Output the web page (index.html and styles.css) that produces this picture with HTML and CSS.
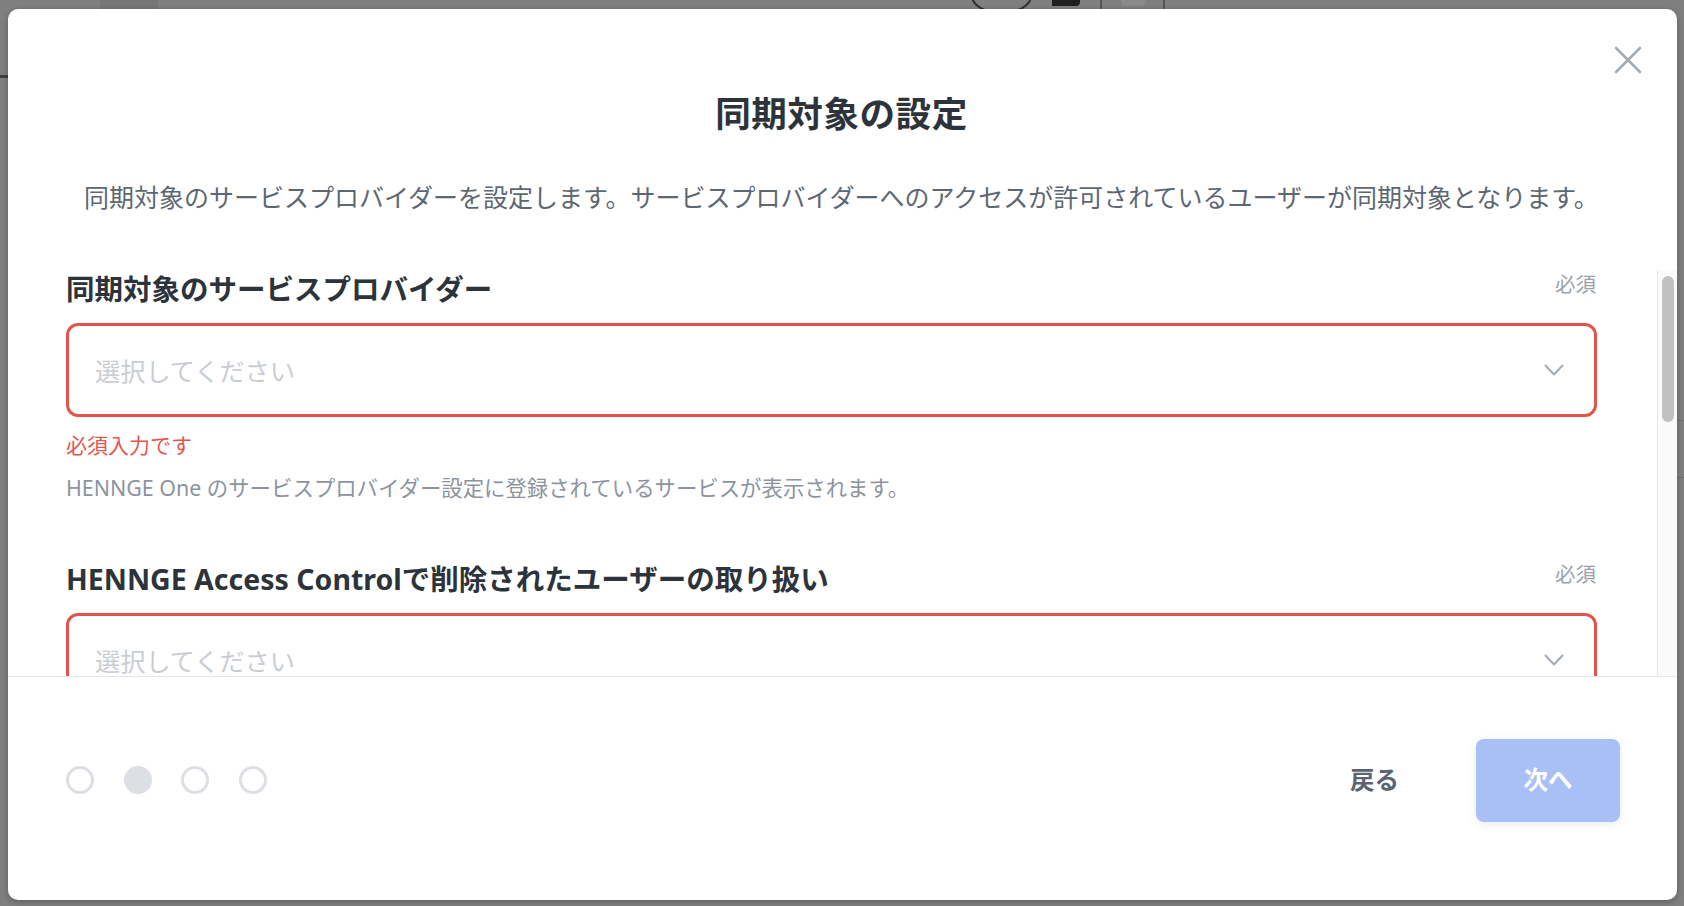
FILE: index.html
```html
<!DOCTYPE html>
<html lang="ja">
<head>
<meta charset="utf-8">
<title>同期対象の設定</title>
<link rel="stylesheet" href="styles.css">
</head>
<body>
<div class="backdrop">
  <div class="bg-tab"></div>
  <div class="bg-line"></div>
  <div class="bg-icons">
    <span class="bg-circle"></span>
    <span class="bg-arrow"></span>
    <span class="bg-box"><span class="bg-dot"></span></span>
  </div>
  <div class="bg-right"></div>
</div>

<div class="modal" role="dialog" aria-labelledby="modal-title">
  <header class="modal-header">
    <button class="close-btn" aria-label="閉じる">
      <svg width="28" height="28" viewBox="0 0 28 28" fill="none" stroke="#a3abb4" stroke-width="2.6" stroke-linecap="round">
        <line x1="2" y1="2" x2="26" y2="26"/>
        <line x1="26" y1="2" x2="2" y2="26"/>
      </svg>
    </button>
    <h1 id="modal-title" class="modal-title">同期対象の設定</h1>
    <p class="modal-desc">同期対象のサービスプロバイダーを設定します。サービスプロバイダーへのアクセスが許可されているユーザーが同期対象となります。</p>
  </header>

  <div class="modal-body">
    <div class="body-content">
      <section class="field">
        <div class="field-head">
          <label class="field-label">同期対象のサービスプロバイダー</label>
          <span class="required">必須</span>
        </div>
        <div class="select is-error">
          <span class="placeholder">選択してください</span>
          <svg class="chevron" width="20" height="12" viewBox="0 0 20 12" fill="none" stroke="#a3abb4" stroke-width="2" stroke-linecap="round" stroke-linejoin="round">
            <polyline points="1.5,1.5 10,10.5 18.5,1.5"/>
          </svg>
        </div>
        <p class="error-text">必須入力です</p>
        <p class="help-text">HENNGE One のサービスプロバイダー設定に登録されているサービスが表示されます。</p>
      </section>

      <section class="field field-second">
        <div class="field-head">
          <label class="field-label">HENNGE Access Controlで削除されたユーザーの取り扱い</label>
          <span class="required">必須</span>
        </div>
        <div class="select is-error">
          <span class="placeholder">選択してください</span>
          <svg class="chevron" width="20" height="12" viewBox="0 0 20 12" fill="none" stroke="#a3abb4" stroke-width="2" stroke-linecap="round" stroke-linejoin="round">
            <polyline points="1.5,1.5 10,10.5 18.5,1.5"/>
          </svg>
        </div>
      </section>
    </div>
    <div class="scrollbar">
      <div class="scroll-thumb"></div>
    </div>
  </div>

  <footer class="modal-footer">
    <div class="steps">
      <span class="step"></span>
      <span class="step is-current"></span>
      <span class="step"></span>
      <span class="step"></span>
    </div>
    <div class="actions">
      <button class="btn-back">戻る</button>
      <button class="btn-next" disabled>次へ</button>
    </div>
  </footer>
</div>
</body>
</html>
```

FILE: styles.css
```css
* {
  box-sizing: border-box;
}

html, body {
  margin: 0;
  padding: 0;
}

body {
  width: 1684px;
  height: 906px;
  overflow: hidden;
  background: #7f7f7f;
  font-family: "Noto Sans", "Noto Sans CJK JP", sans-serif;
  position: relative;
  display: flex;
}

/* background page (under the overlay) */
.backdrop {
  position: absolute;
  inset: 0;
}

.bg-tab {
  position: absolute;
  left: 100px;
  top: 0;
  width: 58px;
  height: 10px;
  background: #777777;
}

.bg-line {
  position: absolute;
  left: 0;
  top: 75px;
  width: 8px;
  height: 3px;
  background: #3f3f3f;
}

.bg-icons {
  position: absolute;
  left: 971px;
  top: -22px;
  display: flex;
  align-items: flex-start;
  gap: 20px;
}

.bg-circle {
  width: 61px;
  height: 36px;
  border: 2px solid #2f2f2f;
  border-radius: 50%;
}

.bg-arrow {
  margin-top: 20px;
  width: 28px;
  height: 8px;
  background: #1f1f1f;
  border-radius: 0 0 4px 0;
}

.bg-box {
  width: 65px;
  height: 32px;
  border-left: 2px solid #555;
  border-right: 2px solid #555;
  display: flex;
  align-items: flex-end;
  justify-content: center;
  padding-bottom: 4px;
}

.bg-dot {
  width: 24px;
  height: 8px;
  border-radius: 4px;
  background: #8a8a8a;
}

.bg-right {
  position: absolute;
  left: 1677px;
  top: 420px;
  width: 7px;
  height: 58px;
  border-top: 1px solid #6f6f6f;
  border-bottom: 1px solid #6f6f6f;
}

/* modal */
.modal {
  position: relative;
  margin: 9px 7px 6px 8px;
  width: 1669px;
  height: 891px;
  background: #ffffff;
  border-radius: 10px;
  display: flex;
  flex-direction: column;
  overflow: hidden;
  box-shadow: 0 2px 6px rgba(0, 0, 0, 0.25);
}

.modal-header {
  position: relative;
  padding: 77px 60px 55px 58px;
  text-align: center;
  flex: none;
}

.close-btn {
  position: absolute;
  top: 37px;
  right: 35px;
  width: 28px;
  height: 28px;
  padding: 0;
  border: 0;
  background: transparent;
  cursor: pointer;
  display: flex;
}

.modal-title {
  margin: 0;
  font-size: 35.6px;
  line-height: 54px;
  font-weight: 700;
  color: #2d333b;
  letter-spacing: 0.5px;
}

.modal-desc {
  margin: 39px 0 0;
  font-size: 25px;
  line-height: 36px;
  color: #5d6772;
  white-space: nowrap;
}

.modal-body {
  flex: none;
  height: 406px;
  display: flex;
  overflow: hidden;
}

.body-content {
  flex: 1;
  padding: 0 60px 0 58px;
  overflow: hidden;
}

.scrollbar {
  flex: none;
  width: 20px;
  background: #fafafa;
  border-left: 1px solid #e6e6e6;
  padding: 6px 3px 0 4px;
}

.scroll-thumb {
  height: 146px;
  border-radius: 6px;
  background: #c1c1c1;
}

.field-head {
  display: flex;
  justify-content: space-between;
  align-items: flex-start;
}

.field-label {
  font-size: 28.5px;
  line-height: 38px;
  font-weight: 700;
  color: #2d333b;
}

.required {
  font-size: 20.5px;
  line-height: 28px;
  color: #9aa2ac;
  margin-right: 1px;
}

.select {
  margin-top: 15px;
  height: 94px;
  border: 3px solid #e2554d;
  border-radius: 12px;
  display: flex;
  align-items: center;
  justify-content: space-between;
  padding: 0 30px 0 26px;
}

.placeholder {
  font-size: 25.2px;
  color: #c9cdd3;
}

.chevron {
  flex: none;
}

.error-text {
  margin: 12px 0 0;
  font-size: 21px;
  line-height: 32px;
  color: #e2554d;
}

.help-text {
  margin: 11px 0 0;
  font-size: 21.4px;
  line-height: 32px;
  color: #8b949e;
}

.field-second {
  margin-top: 56px;
}

/* footer */
.modal-footer {
  flex: 1;
  border-top: 1px solid #e4e6e9;
  display: flex;
  justify-content: space-between;
  align-items: flex-start;
  padding: 62px 57px 0 58px;
}

.steps {
  display: flex;
  gap: 29.5px;
  margin-top: 27px;
}

.step {
  width: 28px;
  height: 28px;
  border-radius: 50%;
  border: 3px solid #dcdfe3;
}

.step.is-current {
  background: #dcdfe3;
}

.actions {
  display: flex;
  align-items: center;
  gap: 53px;
}

.btn-back {
  border: 0;
  background: transparent;
  font-family: inherit;
  font-size: 24.5px;
  font-weight: 700;
  color: #5b6470;
  padding: 0 24px 5px;
  cursor: pointer;
}

.btn-next {
  width: 144px;
  height: 83px;
  border: 0;
  border-radius: 8px;
  background: #a9c0f6;
  color: #ffffff;
  font-family: inherit;
  font-size: 24.5px;
  font-weight: 700;
  padding: 0 0 4px;
  box-shadow: 0 2px 8px rgba(60, 80, 120, 0.12);
}
```
